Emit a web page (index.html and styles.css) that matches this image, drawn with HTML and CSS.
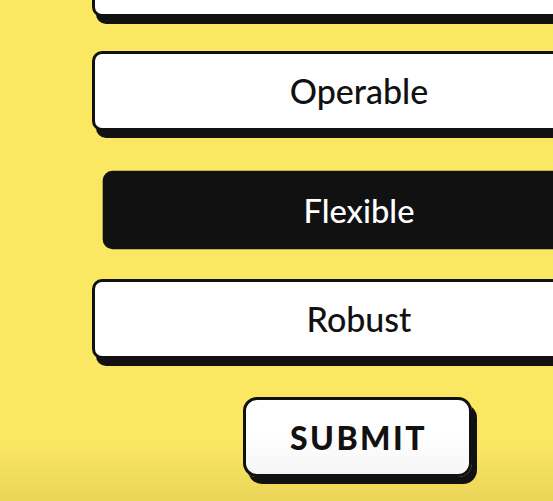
FILE: index.html
```html
<!DOCTYPE html>
<html lang="en">
<head>
<meta charset="utf-8">
<title>Principles</title>
<link rel="stylesheet" href="styles.css">
</head>
<body>
<main class="page">
  <form class="choices">
    <button type="button" class="option option--offscreen">Perceivable</button>
    <button type="button" class="option">Operable</button>
    <button type="button" class="option option--selected">Flexible</button>
    <button type="button" class="option">Robust</button>
    <button type="submit" class="submit">SUBMIT</button>
  </form>
</main>
</body>
</html>
```
FILE: styles.css
```css
html, body {
  margin: 0;
  height: 100%;
}
body {
  background: linear-gradient(to bottom, #fbe862 0, #fbe862 440px, #ead559 501px);
  font-family: "Lato", "Noto Sans", sans-serif;
  overflow: hidden;
}
.page {
  padding-left: 92px;
  height: 501px;
  overflow: hidden;
}
.choices {
  width: 534px;
  display: flex;
  flex-direction: column;
  gap: 34px;
  margin-top: -63px;
}
.option {
  box-sizing: border-box;
  height: 80px;
  width: 100%;
  border: 3.5px solid #111;
  border-radius: 10px;
  background: #fff;
  box-shadow: 4px 7px 0 #111;
  color: #111;
  font-family: inherit;
  font-size: 34px;
  font-weight: 500;
  line-height: 1.1;
  padding: 0;
  display: flex;
  align-items: center;
  justify-content: center;
}
.option--offscreen {
  align-items: flex-start;
  padding-top: 0;
  line-height: 1;
}
.option--selected {
  background: #111;
  color: #fff;
  box-shadow: none;
  transform: translateY(5px) scale(0.96, 0.98);
}
.submit {
  box-sizing: border-box;
  align-self: flex-start;
  margin-left: 151px;
  margin-top: 4px;
  width: 229px;
  height: 80px;
  border: 3.5px solid #111;
  border-radius: 14px;
  background: linear-gradient(to bottom, #fff 40%, #f6f6f6 100%);
  box-shadow: 5px 7px 0 #111;
  color: #111;
  font-family: inherit;
  font-size: 32px;
  font-weight: 900;
  letter-spacing: 2.5px;
  padding: 0 0 0 2px;
}
```
